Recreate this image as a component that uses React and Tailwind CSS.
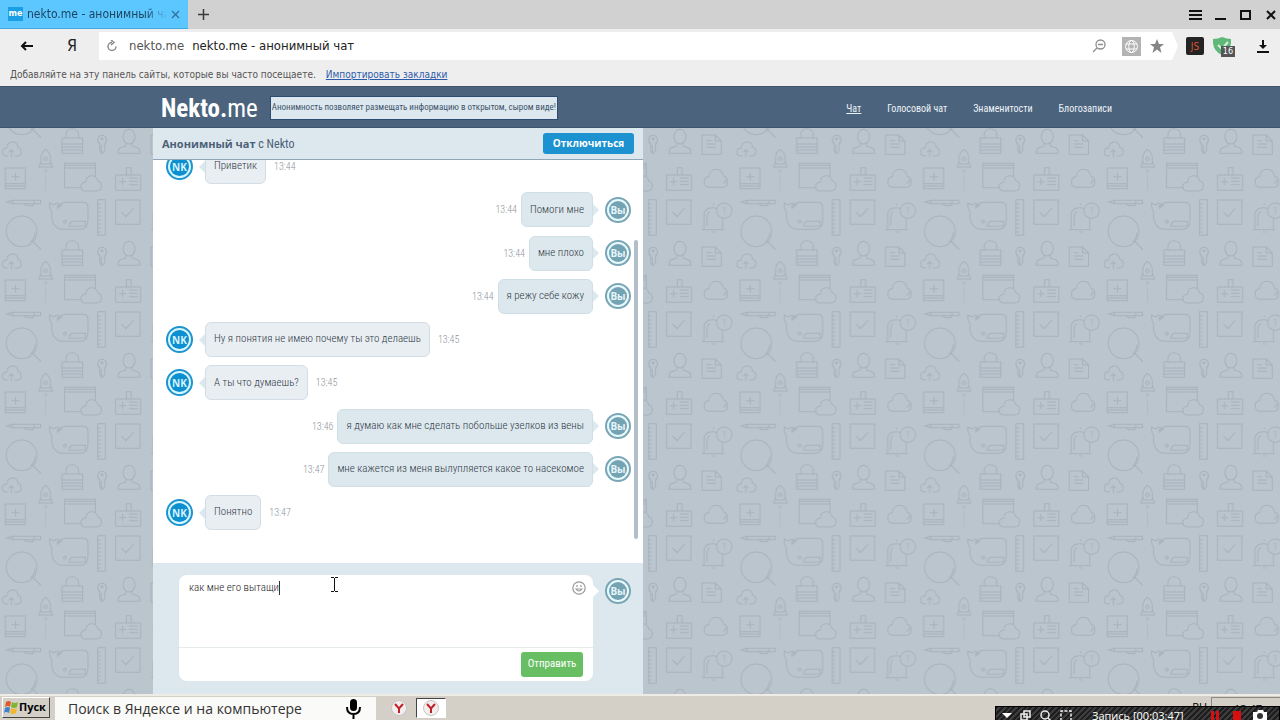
import { useState } from "react";

const messages = [
  { id: 1, from: "nk", text: "Приветик", time: "13:44" },
  { id: 2, from: "me", text: "Помоги мне", time: "13:44" },
  { id: 3, from: "me", text: "мне плохо", time: "13:44" },
  { id: 4, from: "me", text: "я режу себе кожу", time: "13:44" },
  {
    id: 5,
    from: "nk",
    text: "Ну я понятия не имею почему ты это делаешь",
    time: "13:45",
  },
  { id: 6, from: "nk", text: "А ты что думаешь?", time: "13:45" },
  {
    id: 7,
    from: "me",
    text: "я думаю как мне сделать побольше узелков из вены",
    time: "13:46",
  },
  {
    id: 8,
    from: "me",
    text: "мне кажется из меня вылупляется какое то насекомое",
    time: "13:47",
  },
  { id: 9, from: "nk", text: "Понятно", time: "13:47" },
];

const navLinks = ["Чат", "Голосовой чат", "Знаменитости", "Блогозаписи"];

function Magnifier() {
  return (
    <>
      <circle cx="349" cy="316" r="46" />
      <path d="M376 348q12-10 13-28M383 347l24 24" />
    </>
  );
}

function WindowCloud() {
  return (
    <>
      <path d="M528 185h-50v-73h92v42M478 118h92M478 126h92" />
      <path d="M541 195c-20 0-18-26 0-26c2-26 33-26 36-4c18 4 12 30-2 30z" />
    </>
  );
}

// one repeat of the doodle wallpaper
function Wallpaper() {
  return (
    <svg className="absolute inset-0 h-full w-full" aria-hidden="true">
      <defs>
        <pattern
          id="doodles"
          width="551"
          height="336"
          patternUnits="userSpaceOnUse"
          patternTransform="translate(89 -2) scale(.3333)"
        >
          <g fill="none" stroke="#a7b1bc" strokeWidth="3">
            <path d="M36 82l-4-10V54c-10-8-6-26 7-26s18 18 8 26v18l-5 10zM37 56v24" />
            <circle cx="39" cy="38" r="3" />
            <ellipse cx="120" cy="32" rx="18" ry="22" />
            <path d="M111 52v8l-18 6q-6 4-6 16h66q0-12-6-16l-18-6v-8" />
            <path d="M186 27h40l18 18v40h-58zM226 27v18h18M200 54h28M200 64h28M200 44h14" />
            <path d="M308 90h-6c-16-2-14-24 2-24c2-24 32-24 34-2c14 4 12 26-2 26h-8M318 94V72M310 79l8-8l8 8" />
            <path d="M407 114V92q2-14 14-22q12 8 14 22v22M407 106l-6 17h41l-7-17M407 114h28" />
            <circle cx="421" cy="98" r="5" />
            <path d="M417 132l4 10l4-10zM421 148v46" strokeWidth="1.5" />
            <path d="M470 36h62v46h-62zM470 54h62M470 63h62M470 72h62M482 36V26c2-24 36-24 38 0v10" />
            <path d="M80 147h75v46H80zM112 147v-22h14v22M90 167h22M101 156v22M120 156h26M120 166h26M120 176h26" />
            <path d="M206 184c-18-2-18-30 0-32c4-30 42-28 44-2c18 4 16 34-2 34zM250 172q8-2 7-12" />
            <path d="M300 126h60v62h-60zM300 173h60M300 180h60M319 152h24M331 140v24" />
            <WindowCloud />
            <g transform="translate(-551 0)">
              <WindowCloud />
            </g>
            <path d="M26 221h23v107H26zM26 234h9M26 246h9M26 258h9M26 270h9M26 282h9M26 294h9M26 306h9M26 318h9" />
            <path d="M80 222h73v73H80zM97 258l14 14l23-26" />
            <path d="M186 311h66M192 311v-44c0-12 8-22 26-22q8 0 14 3M248 276v35M220 232v6M216 318h8M201 300v-30q2-10 9-14" />
            <circle cx="253" cy="254" r="23" />
            <path d="M249 246l5-3v22" strokeWidth="2" />
            <path d="M304 228l18-5h84v10h-84zM322 223v10M386 223v10M356 233l8 6h18l4-6" />
            <Magnifier />
            <g transform="translate(0 -336)">
              <Magnifier />
            </g>
            <path d="M433 231q10 6 14 5q8-8 12-4q2 5-5 12q8-8 16-13q5-2 12-2h52q14 1 14 15v38q0 28-22 28h-56c-26-4-34-28-30-52q-8-8-7-27zM470 236l-14 12M492 301v-7l8-8h40v14z" />
            <circle cx="479" cy="287" r="4" />
          </g>
        </pattern>
      </defs>
      <rect width="100%" height="100%" fill="url(#doodles)" />
    </svg>
  );
}

function Avatar({ me }) {
  return (
    <span
      className={
        me
          ? "flex size-[26px] shrink-0 items-center justify-center rounded-full border-2 border-[#7aa5b5] bg-[#e8fafd] p-[2px]"
          : "flex size-[27px] shrink-0 items-center justify-center rounded-full border-2 border-[#1b94cf] bg-[#d8f6ff] p-[2px]"
      }
    >
      <span
        className={
          me
            ? "flex size-full items-center justify-center rounded-full bg-[#74a3b3] font-['Open_Sans',sans-serif] text-[10px] leading-none font-bold text-[#e6f6fa]"
            : "flex size-full items-center justify-center rounded-full bg-[#0d8fd0] font-['Open_Sans',sans-serif] text-[10px] leading-none font-bold text-[#d5f3ff]"
        }
      >
        {me ? "Вы" : "NK"}
      </span>
    </span>
  );
}

function Message({ msg }) {
  const me = msg.from === "me";

  return (
    <li className={me ? "flex flex-row-reverse items-center" : "flex items-center"}>
      <Avatar me={me} />
      <svg
        className={me ? "mr-[6px] h-3 w-[6px] rotate-180" : "ml-[6px] h-3 w-[6px]"}
        viewBox="0 0 6 12"
        aria-hidden="true"
      >
        <path d="M6 0v12L0 6z" fill="#dce8ee" />
      </svg>
      <p
        className={
          me
            ? "flex h-[35px] items-center rounded-md border border-[#cfdfe6] bg-[#dde8ee] px-2 text-[11px] font-light whitespace-nowrap text-[#2f3a45]"
            : "flex h-[35px] items-center rounded-md border border-[#d3dde5] bg-[#e9eef3] px-2 text-[11px] font-light whitespace-nowrap text-[#2f3a45]"
        }
      >
        {msg.text}
      </p>
      <time
        className={
          me
            ? "mr-1 text-[10px] font-light text-[#8d949b]"
            : "ml-2 text-[10px] font-light text-[#8d949b]"
        }
      >
        {msg.time}
      </time>
    </li>
  );
}

function BrowserChrome() {
  return (
    <div className="shrink-0 bg-[#eeeeee] font-['DejaVu_Sans_Condensed','DejaVu_Sans',sans-serif]">
      <div className="flex h-[29px] items-center bg-[#d1d1d1]">
        <div className="flex h-full w-[188px] items-center border-b border-[#3fa9e0] bg-[#5cc6ff] pr-2 pl-2">
          <span className="flex h-[14px] w-[15px] shrink-0 items-center justify-center bg-[#1b9fe4] text-[9px] font-bold text-white">
            me
          </span>
          <span className="ml-1 flex-1 overflow-hidden text-xs whitespace-nowrap text-[#1d4560] [mask-image:linear-gradient(to_right,#000_85%,transparent)]">
            nekto.me - анонимный чат
          </span>
          <button type="button" aria-label="Закрыть вкладку" className="ml-1">
            <svg width="9" height="9" viewBox="0 0 9 9" stroke="#2f6f96" strokeWidth="1.2">
              <path d="M1 1l7 7M8 1l-7 7" />
            </svg>
          </button>
        </div>
        <button type="button" aria-label="Новая вкладка" className="ml-[10px]">
          <svg width="11" height="11" viewBox="0 0 11 11" stroke="#3a3a3a" strokeWidth="1.5">
            <path d="M5.5 0v11M0 5.5h11" />
          </svg>
        </button>
        <div className="ml-auto flex items-center gap-3 pr-[3px]">
          <button type="button" aria-label="Меню">
            <svg width="13" height="12" viewBox="0 0 13 12" stroke="#111" strokeWidth="2">
              <path d="M0 2h13M0 6h13M0 10h13" />
            </svg>
          </button>
          <button type="button" aria-label="Свернуть">
            <svg width="13" height="12" viewBox="0 0 13 12" stroke="#111" strokeWidth="2">
              <path d="M1 10h11" />
            </svg>
          </button>
          <button type="button" aria-label="Развернуть">
            <svg width="13" height="12" viewBox="0 0 13 12" fill="none" stroke="#111" strokeWidth="2">
              <path d="M2 2h9v8H2z" />
            </svg>
          </button>
          <button type="button" aria-label="Закрыть">
            <svg width="13" height="12" viewBox="0 0 13 12" stroke="#111" strokeWidth="2">
              <path d="M3 2l8 8M11 2l-8 8" />
            </svg>
          </button>
        </div>
      </div>

      <div className="flex h-[34px] items-center">
        <button type="button" aria-label="Назад" className="ml-5">
          <svg width="13" height="10" viewBox="0 0 13 10" fill="none" stroke="#111" strokeWidth="2">
            <path d="M13 5H2M6 1L2 5l4 4" />
          </svg>
        </button>
        <button type="button" className="ml-[33px] w-3 text-base leading-none text-[#222]">
          Я
        </button>
        <div className="ml-[21px] flex h-7 flex-1 items-center bg-white pl-[7px] text-[13px]">
          <svg width="11" height="12" viewBox="0 0 11 12" fill="none" stroke="#8b8b8b" strokeWidth="1.5">
            <path d="M6 2.5a4 4 0 1 0 4 4M5 0l3 2.5L5 5" />
          </svg>
          <span className="ml-3 text-[#555]">nekto.me</span>
          <span className="ml-2 text-[#222]">nekto.me - анонимный чат</span>
          <svg className="ml-auto" width="14" height="14" viewBox="0 0 14 14" fill="none" stroke="#8e8e8e" strokeWidth="1.3">
            <circle cx="8.500" cy="5.500" r="4.500" />
            <path d="M6 5.500h5M5 9l-4 4" />
          </svg>
          <svg className="ml-4" width="19" height="19" viewBox="0 0 19 19" fill="none" stroke="#fff">
            <path d="M0 0h19v19H0z" fill="#b3b3b3" stroke="none" />
            <circle cx="9.500" cy="9.500" r="6" />
            <ellipse cx="9.500" cy="9.500" rx="2.700" ry="6" />
            <path d="M4 7h11M4 12h11" />
          </svg>
          <svg className="ml-[9px]" width="14" height="14" viewBox="0 0 14 14" fill="#858585">
            <path d="M7 0l2 5h5l-4 3.300L11.500 14L7 10.500L2.500 14L4 8.300L0 5h5z" />
          </svg>
          <svg width="14" height="28" viewBox="0 0 14 28" aria-hidden="true">
            <path d="M8 0h6v28H8l6-14z" fill="#eeeeee" />
          </svg>
        </div>
        <div className="flex items-center pr-[11px]">
          <span className="ml-2 flex h-[18px] w-[18px] items-center justify-center rounded-xs bg-[#242424] text-[10px] text-[#d9532c]">
            JS
          </span>
          <span className="relative ml-[9px] block h-[19px] w-[22px]">
            <svg width="18" height="18" viewBox="0 0 18 18">
              <path d="M9 0q5 2 9 2q1 12-9 16Q-1 14 0 2q5 0 9-2z" fill="#5fb878" />
              <path d="M5 8l4 4l6-7" fill="none" stroke="#d6f0dc" strokeWidth="2" />
            </svg>
            <span className="absolute right-0 -bottom-px h-[11px] w-[14px] bg-[#555] text-center text-[9px] leading-[11px] text-white">
              16
            </span>
          </span>
          <button type="button" aria-label="Загрузки" className="ml-[22px]">
            <svg width="12" height="13" viewBox="0 0 12 13" fill="none" stroke="#111" strokeWidth="2">
              <path d="M6 0v7M0 12h12" />
              <path d="M2 5h8l-4 4z" fill="#111" stroke="none" />
            </svg>
          </button>
        </div>
      </div>

      <p className="flex h-[23px] items-center gap-[10px] pl-[10px] text-[10px] text-[#555]">
        Добавляйте на эту панель сайты, которые вы часто посещаете.
        <a href="#import" className="text-[#2d5bab] underline">
          Импортировать закладки
        </a>
      </p>
    </div>
  );
}

function SiteHeader() {
  return (
    <header className="shrink-0 border-y border-[#3f556e] bg-[#4b637d]">
      <div className="mx-auto flex h-10 max-w-[974px] items-center px-2 pt-[2px]">
        <a href="#home" className="text-[25px] leading-none text-white">
          <b>Nekto.</b>me
        </a>
        <p className="ml-3 flex h-6 items-center border border-[#2f4d74] bg-[#dde8ee] px-px text-[9px] whitespace-nowrap text-[#40536c]">
          Анонимность позволяет размещать информацию в открытом, сыром виде!
        </p>
        <nav className="ml-auto flex gap-[26px] pr-[7px] text-[10px] text-[#eef3f8]">
          {navLinks.map((link, i) => (
            <a key={link} href={`#${i}`} className={i === 0 ? "underline" : ""}>
              {link}
            </a>
          ))}
        </nav>
      </div>
    </header>
  );
}

function Compose() {
  const [text, setText] = useState("как мне его вытащи");

  return (
    <form className="flex h-[131px] shrink-0 items-start bg-[#dde8ee] pt-3 pl-[26px]">
      <div className="relative flex h-[106px] w-[414px] flex-col rounded-lg bg-white">
        <textarea
          aria-label="Сообщение"
          value={text}
          onChange={(e) => setText(e.target.value)}
          className="w-full flex-1 resize-none px-[10px] pt-1 text-[11px] leading-[18px] font-light text-[#222] outline-none"
        />
        <span className="absolute top-[6px] left-[100px] h-[14px] w-px bg-[#333]" />
        <button type="button" aria-label="Смайлы" className="absolute top-[6px] right-[7px]">
          <svg width="14" height="14" viewBox="0 0 14 14" fill="none" stroke="#999" strokeWidth="1.2">
            <circle cx="7" cy="7" r="6.200" />
            <path d="M4 8q3 4 6 0zM5 4v2M9 4v2" />
          </svg>
        </button>
        <svg className="absolute top-[2px] left-[152px]" width="7" height="15" viewBox="0 0 7 15" fill="none" stroke="#111">
          <path d="M0 .5h3M4 .5h3M3.500 1v13M0 14.500h3M4 14.500h3" />
        </svg>
        <div className="flex h-[34px] shrink-0 items-center justify-end border-t border-[#e6ebee] pr-[10px]">
          <button
            type="button"
            className="h-[25px] w-[62px] rounded-[3px] bg-[#68bf63] text-[11px] text-white"
          >
            Отправить
          </button>
        </div>
      </div>
      <svg className="mt-[10px] h-3 w-[6px]" viewBox="0 0 6 12" aria-hidden="true">
        <path d="M0 0v12l6-6z" fill="#fff" />
      </svg>
      <div className="mt-[3px] ml-[6px]">
        <Avatar me />
      </div>
    </form>
  );
}

function YandexMark() {
  return (
    <svg width="16" height="16" viewBox="0 0 16 16">
      <circle cx="8" cy="8" r="7.500" fill="#f3eeee" stroke="#c9c4c4" />
      <path d="M4 4l4 4.500L12 4M8 8v5" fill="none" stroke="#c3202a" strokeWidth="2" />
    </svg>
  );
}

function Taskbar() {
  return (
    <footer className="relative flex h-[26px] shrink-0 items-start overflow-hidden border-t-2 border-[#efece6] bg-[#d4d0c8] font-['Open_Sans',sans-serif]">
      <button
        type="button"
        className="mt-px ml-[2px] flex h-[21px] w-[48px] items-center gap-px border border-t-white border-r-[#444] border-b-[#444] border-l-white bg-[#d4d0c8] pl-px text-[11px] font-bold text-black"
      >
        <svg width="14" height="13" viewBox="0 0 14 13">
          <path d="M2 1q3-2 5 0L6 6Q4 4 1 6z" fill="#e0592a" />
          <path d="M8 1q3 2 6 0l-1 5q-3 2-6 0z" fill="#7fb533" />
          <path d="M1 7q3-2 5 0l-1 5q-3-2-5 0z" fill="#3f82cf" />
          <path d="M7 7q3 2 6 0l-1 5q-3 2-6 0z" fill="#f0b72f" />
        </svg>
        Пуск
      </button>
      <label className="mt-px ml-[5px] flex h-6 w-[321px] items-center bg-[#fafaf8] pl-[13px]">
        <input
          type="text"
          aria-label="Поиск"
          placeholder="Поиск в Яндексе и на компьютере"
          className="w-[260px] text-sm outline-none placeholder:text-[#333]"
        />
        <svg className="ml-[18px]" width="15" height="20" viewBox="0 0 15 20">
          <rect x="4" width="7" height="12" rx="3.500" fill="#000" />
          <path d="M1 8q0 7 6.500 7T14 8M7.500 15v5" fill="none" stroke="#000" strokeWidth="2" />
        </svg>
      </label>
      <button type="button" aria-label="Яндекс.Браузер" className="mt-1 ml-[15px]">
        <YandexMark />
      </button>
      <button
        type="button"
        aria-label="nekto.me"
        className="mt-[2px] ml-[9px] flex h-5 w-[30px] items-center justify-center border border-t-[#444] border-r-white border-b-white border-l-[#444] bg-white"
      >
        <YandexMark />
      </button>
      <span className="mt-[5px] mr-1 ml-auto text-[11px] leading-none text-black">RU</span>
      <div className="mt-px h-6 w-[69px] border-t border-l border-[#8d8a84] pt-[5px] pl-[22px] text-[11px] leading-none">
        13:47
      </div>

      {/* screen recorder strip */}
      <div className="absolute top-[10px] right-0 flex h-5 w-[285px] items-center border border-black bg-[repeating-linear-gradient(135deg,#1d1d1d_0_2px,#3d3d3d_2px_4px)] pl-[6px] text-white">
        <svg width="10" height="6" viewBox="0 0 10 6" fill="#fff">
          <path d="M0 0h10L5 5z" />
        </svg>
        <svg className="ml-2" width="11" height="12" viewBox="0 0 11 12" fill="none" stroke="#eee" strokeWidth="1.500">
          <path d="M4 1h6v6H4zM1 4h6v6H1z" />
        </svg>
        <svg className="ml-2" width="13" height="13" viewBox="0 0 13 13" fill="none" stroke="#eee" strokeWidth="1.500">
          <circle cx="6" cy="5" r="4" />
          <path d="M9 8l4 4" />
        </svg>
        <svg className="ml-2" width="12" height="12" viewBox="0 0 12 12" fill="none" stroke="#eee" strokeWidth="1.500">
          <path d="M1 11V1h10v10" strokeDasharray="3 1.500" />
        </svg>
        <span className="ml-5 text-[11px] whitespace-nowrap">Запись [00:03:47]</span>
        <svg className="ml-auto mr-[12px]" width="58" height="14" viewBox="0 0 58 14">
          <path d="M2 2h3v10H2zM7 2h3v10H7zM24 2h8v9h-8z" fill="#d90f0f" />
          <path d="M44 3h4l1-2h5l1 2h3v10H44z" fill="#fff" />
          <circle cx="51" cy="7" r="3" fill="#333" />
        </svg>
      </div>
    </footer>
  );
}

export default function App() {
  return (
    <div className="flex h-screen flex-col overflow-hidden font-['Roboto_Condensed','Liberation_Sans_Narrow',sans-serif]">
      <BrowserChrome />
      <SiteHeader />

      <main className="relative flex min-h-0 flex-1 flex-col bg-[#bbc5ce]">
        <Wallpaper />
        <div className="relative mx-auto flex min-h-0 w-full max-w-[974px] flex-1">
          <section className="flex w-[490px] flex-col bg-white">
            <div className="flex h-8 shrink-0 items-center border-b border-[#8fa5b8] bg-[#dde8ee] pr-[9px] pl-[9px]">
              <h1 className="text-xs text-[#4c5f78]">
                <b className="font-['Open_Sans',sans-serif] text-[11px]">Анонимный чат</b> с Nekto
              </h1>
              <button
                type="button"
                className="ml-auto h-[21px] w-[91px] rounded-[3px] bg-[#1c92d0] font-['Open_Sans',sans-serif] text-[10px] font-bold text-white"
              >
                Отключиться
              </button>
            </div>

            <div className="relative flex min-h-0 flex-1 flex-col justify-end overflow-hidden pr-3 pb-[33px] pl-[13px]">
              <ul className="flex h-[381px] shrink-0 flex-col justify-between">
                {messages.map((msg) => (
                  <Message key={msg.id} msg={msg} />
                ))}
              </ul>
              <span className="absolute right-[5px] bottom-6 h-[299px] w-1 rounded-full bg-[#b3bfc8]" />
            </div>

            <Compose />
          </section>
        </div>
      </main>

      <Taskbar />
    </div>
  );
}
